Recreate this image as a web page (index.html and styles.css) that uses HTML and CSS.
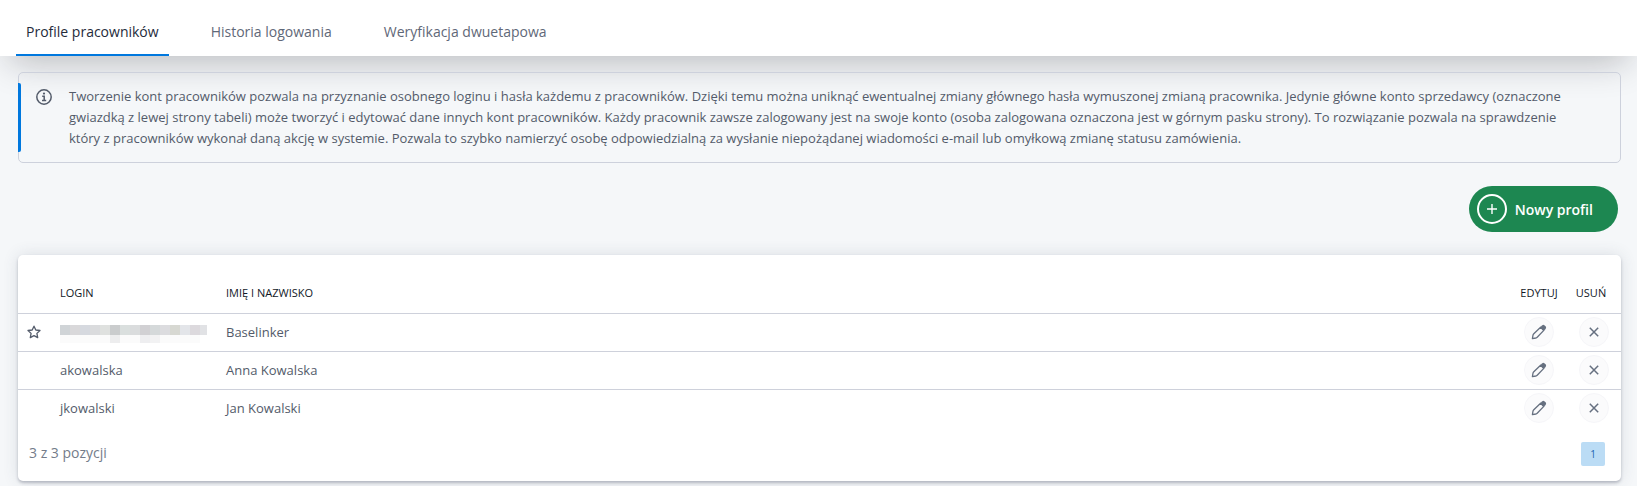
FILE: index.html
```html
<!DOCTYPE html>
<html lang="pl">
<head>
<meta charset="utf-8">
<title>Profile pracowników</title>
<link rel="stylesheet" href="styles.css">
</head>
<body>
<svg class="sprite" aria-hidden="true">
  <symbol id="pencil" viewBox="0 0 16 16">
    <path d="M1.4 14.6 2 11.2Q2.2 10.4 2.8 9.8L9.6 3.2 12.8 6.4 6.2 13.2Q5.6 13.8 4.8 14Z" fill="none" stroke="currentColor" stroke-width="1.3" stroke-linejoin="round"/>
    <path d="M9 3.4 11 1.4Q12.2 .4 13.4 1.2L14.8 2.6Q15.6 3.8 14.6 5L12.6 7Z" fill="currentColor"/>
  </symbol>
  <symbol id="cross" viewBox="0 0 16 16">
    <path d="M3.8 3.8 12.2 12.2M12.2 3.8 3.8 12.2" fill="none" stroke="currentColor" stroke-width="1.5"/>
  </symbol>
</svg>
<nav class="tabs">
  <a class="tab tab-active" href="#profile" aria-current="page">Profile pracowników</a>
  <a class="tab" href="#historia">Historia logowania</a>
  <a class="tab" href="#weryfikacja">Weryfikacja dwuetapowa</a>
</nav>
<main class="content">
  <section class="notice">
    <svg class="notice-icon" viewBox="0 0 16 16" aria-hidden="true">
      <circle cx="8" cy="8" r="7.2" fill="none" stroke="currentColor" stroke-width="1.5"/>
      <circle cx="8" cy="4.6" r="1.1" fill="currentColor"/>
      <path d="M6.2 7.2H8.2V11.2M6 11.4H10.2" fill="none" stroke="currentColor" stroke-width="1.5"/>
    </svg>
    <p class="notice-text">Tworzenie kont pracowników pozwala na przyznanie osobnego loginu i hasła każdemu z pracowników. Dzięki temu można uniknąć ewentualnej zmiany głównego hasła wymuszonej zmianą pracownika. Jedynie główne konto sprzedawcy (oznaczone gwiazdką z lewej strony tabeli) może tworzyć i edytować dane innych kont pracowników. Każdy pracownik zawsze zalogowany jest na swoje konto (osoba zalogowana oznaczona jest w górnym pasku strony). To rozwiązanie pozwala na sprawdzenie który z pracowników wykonał daną akcję w systemie. Pozwala to szybko namierzyć osobę odpowiedzialną za wysłanie niepożądanej wiadomości e-mail lub omyłkową zmianę statusu zamówienia.</p>
  </section>
  <div class="actions">
    <button class="new-profile" type="button">
      <span class="plus">
        <svg class="plus-icon" viewBox="0 0 12 12" aria-hidden="true"><path d="M6 1V11M1 6H11" stroke="currentColor" stroke-width="1.4"/></svg>
      </span>
      Nowy profil
    </button>
  </div>
  <section class="card">
    <table class="profiles">
      <thead>
        <tr>
          <th class="col-star"></th>
          <th class="col-login">Login</th>
          <th>Imię i nazwisko</th>
          <th class="col-edit">Edytuj</th>
          <th class="col-delete">Usuń</th>
        </tr>
      </thead>
      <tbody>
        <tr>
          <td class="col-star">
            <svg class="star" viewBox="0 0 14 14" aria-label="Konto główne"><path d="M7 1.2 8.8 5 13 5.5 9.9 8.4 10.7 12.6 7 10.6 3.3 12.6 4.1 8.4 1 5.5 5.2 5Z" fill="none" stroke="currentColor" stroke-width="1.3" stroke-linejoin="round"/></svg>
          </td>
          <td>
            <svg class="redacted" viewBox="0 0 147 18" aria-hidden="true" shape-rendering="crispEdges">
              <path fill="#d0d4d7" d="M0 0h10v10H0z"/><path fill="#d9d8da" d="M10 0h10v10H10z"/><path fill="#d6d9df" d="M20 0h10v10H20z"/><path fill="#dadbdd" d="M30 0h10v10H30z"/><path fill="#dfe1df" d="M40 0h10v10H40z"/><path fill="#cacccd" d="M50 0h10v10H50z"/><path fill="#dadfde" d="M60 0h10v10H60z"/><path fill="#dadcdd" d="M70 0h10v10H70z"/><path fill="#d1d0d3" d="M80 0h10v10H80z"/><path fill="#d5d9da" d="M90 0h10v10H90z"/><path fill="#dcdcdf" d="M100 0h10v10H100z"/><path fill="#d7d8d2" d="M110 0h10v10H110z"/><path fill="#e3e5e9" d="M120 0h10v10H120z"/><path fill="#dcd9dd" d="M130 0h10v10H130z"/><path fill="#e1e2e5" d="M140 0h7v10H140z"/>
              <path fill="#fbfbfb" d="M0 10h140v8H0z"/><path fill="#ededee" d="M50 10h10v8H50z"/><path fill="#eeeef0" d="M80 10h10v8H80z"/><path fill="#f2f2f3" d="M90 10h10v8H90z"/>
            </svg>
          </td>
          <td>Baselinker</td>
          <td class="col-edit"><button class="round" type="button" aria-label="Edytuj Baselinker"><svg class="icon"><use href="#pencil"/></svg></button></td>
          <td class="col-delete"><button class="round" type="button" aria-label="Usuń Baselinker"><svg class="icon"><use href="#cross"/></svg></button></td>
        </tr>
        <tr>
          <td class="col-star"></td>
          <td>akowalska</td>
          <td>Anna Kowalska</td>
          <td class="col-edit"><button class="round" type="button" aria-label="Edytuj akowalska"><svg class="icon"><use href="#pencil"/></svg></button></td>
          <td class="col-delete"><button class="round" type="button" aria-label="Usuń akowalska"><svg class="icon"><use href="#cross"/></svg></button></td>
        </tr>
        <tr>
          <td class="col-star"></td>
          <td>jkowalski</td>
          <td>Jan Kowalski</td>
          <td class="col-edit"><button class="round" type="button" aria-label="Edytuj jkowalski"><svg class="icon"><use href="#pencil"/></svg></button></td>
          <td class="col-delete"><button class="round" type="button" aria-label="Usuń jkowalski"><svg class="icon"><use href="#cross"/></svg></button></td>
        </tr>
      </tbody>
    </table>
    <footer class="card-footer">
      <span>3 z 3 pozycji</span>
      <button class="page" type="button" aria-current="page">1</button>
    </footer>
  </section>
</main>
</body>
</html>
```
FILE: styles.css
```css
* {
  box-sizing: border-box;
}

body {
  margin: 0;
  background: #f5f7f9;
  color: #535b6a;
  font-family: "Open Sans", sans-serif;
  font-size: 13px;
  line-height: 21px;
}

button {
  font: inherit;
  cursor: pointer;
}

.sprite {
  position: absolute;
  width: 0;
  height: 0;
}

.tabs {
  display: flex;
  gap: 32px;
  height: 56px;
  padding: 8px 16px 0;
  background: #fff;
  box-shadow: 0 14px 36px -10px rgba(20, 20, 30, 0.3);
}

.tab {
  display: flex;
  align-items: center;
  padding: 0 10px;
  border-bottom: 2px solid transparent;
  border-radius: 2px 2px 0 0;
  color: #5f6878;
  font-size: 14px;
  text-decoration: none;
}

.tab-active {
  border-bottom-color: #0078de;
  color: #252b3b;
}

.content {
  padding: 16px 16px 5px 18px;
}

.notice {
  position: relative;
  display: flex;
  gap: 17px;
  padding: 13px 50px 13px 17px;
  border: 1px solid #cdd1dc;
  border-radius: 5px;
}

.notice::before {
  content: "";
  position: absolute;
  top: 10px;
  bottom: 10px;
  left: -1px;
  width: 3px;
  border-radius: 0 2px 2px 0;
  background: #0078de;
}

.notice-icon {
  flex: none;
  width: 16px;
  height: 16px;
  margin-top: 3px;
}

.notice-text {
  margin: 0;
}

.actions {
  display: flex;
  justify-content: flex-end;
  padding: 23px 3px;
}

.new-profile {
  display: flex;
  align-items: center;
  gap: 8px;
  padding: 8px 25px 8px 8px;
  border: 0;
  border-radius: 23px;
  background: #1d8751;
  color: #fff;
  font-size: 14px;
  font-weight: 600;
}

.plus {
  display: flex;
  align-items: center;
  justify-content: center;
  width: 30px;
  height: 30px;
  border: 2px solid #fff;
  border-radius: 50%;
}

.plus-icon {
  width: 12px;
  height: 12px;
}

.card {
  border-radius: 5px;
  background: #fff;
  box-shadow: 0 2px 3px rgba(60, 65, 90, 0.3), 0 0 16px rgba(60, 70, 90, 0.14);
}

.profiles {
  width: 100%;
  border-collapse: collapse;
}

.profiles th {
  height: 58px;
  padding: 17px 0 0;
  color: #111827;
  font-size: 11px;
  font-weight: 500;
  text-align: left;
  text-transform: uppercase;
}

.profiles td {
  height: 38px;
  padding: 0;
  border-top: 1px solid #ced1db;
}

.profiles .col-star {
  width: 42px;
  padding-left: 9px;
}

.profiles .col-login {
  width: 166px;
}

.profiles .col-edit {
  width: 56px;
  text-align: center;
}

.profiles .col-delete {
  width: 54px;
  text-align: center;
}

.profiles th.col-delete {
  padding-right: 6px;
}

.star,
.redacted,
.icon {
  display: block;
}

.star {
  width: 14px;
  height: 14px;
}

.redacted {
  width: 147px;
  height: 18px;
  margin-top: 4px;
}

.round {
  display: flex;
  align-items: center;
  justify-content: center;
  width: 30px;
  height: 30px;
  margin: 0 auto;
  padding: 0;
  border: 1px solid #f6f6f9;
  border-radius: 50%;
  background: #fbfbfc;
  color: #667080;
}

.icon {
  width: 16px;
  height: 16px;
}

.card-footer {
  display: flex;
  align-items: flex-start;
  justify-content: space-between;
  padding: 15px 16px 15px 11px;
  color: #747c8a;
  font-size: 14px;
}

.page {
  width: 24px;
  height: 24px;
  padding: 0;
  border: 0;
  border-radius: 2px;
  background: #bbdcf5;
  color: #1c66b0;
  font-size: 10px;
}
```
